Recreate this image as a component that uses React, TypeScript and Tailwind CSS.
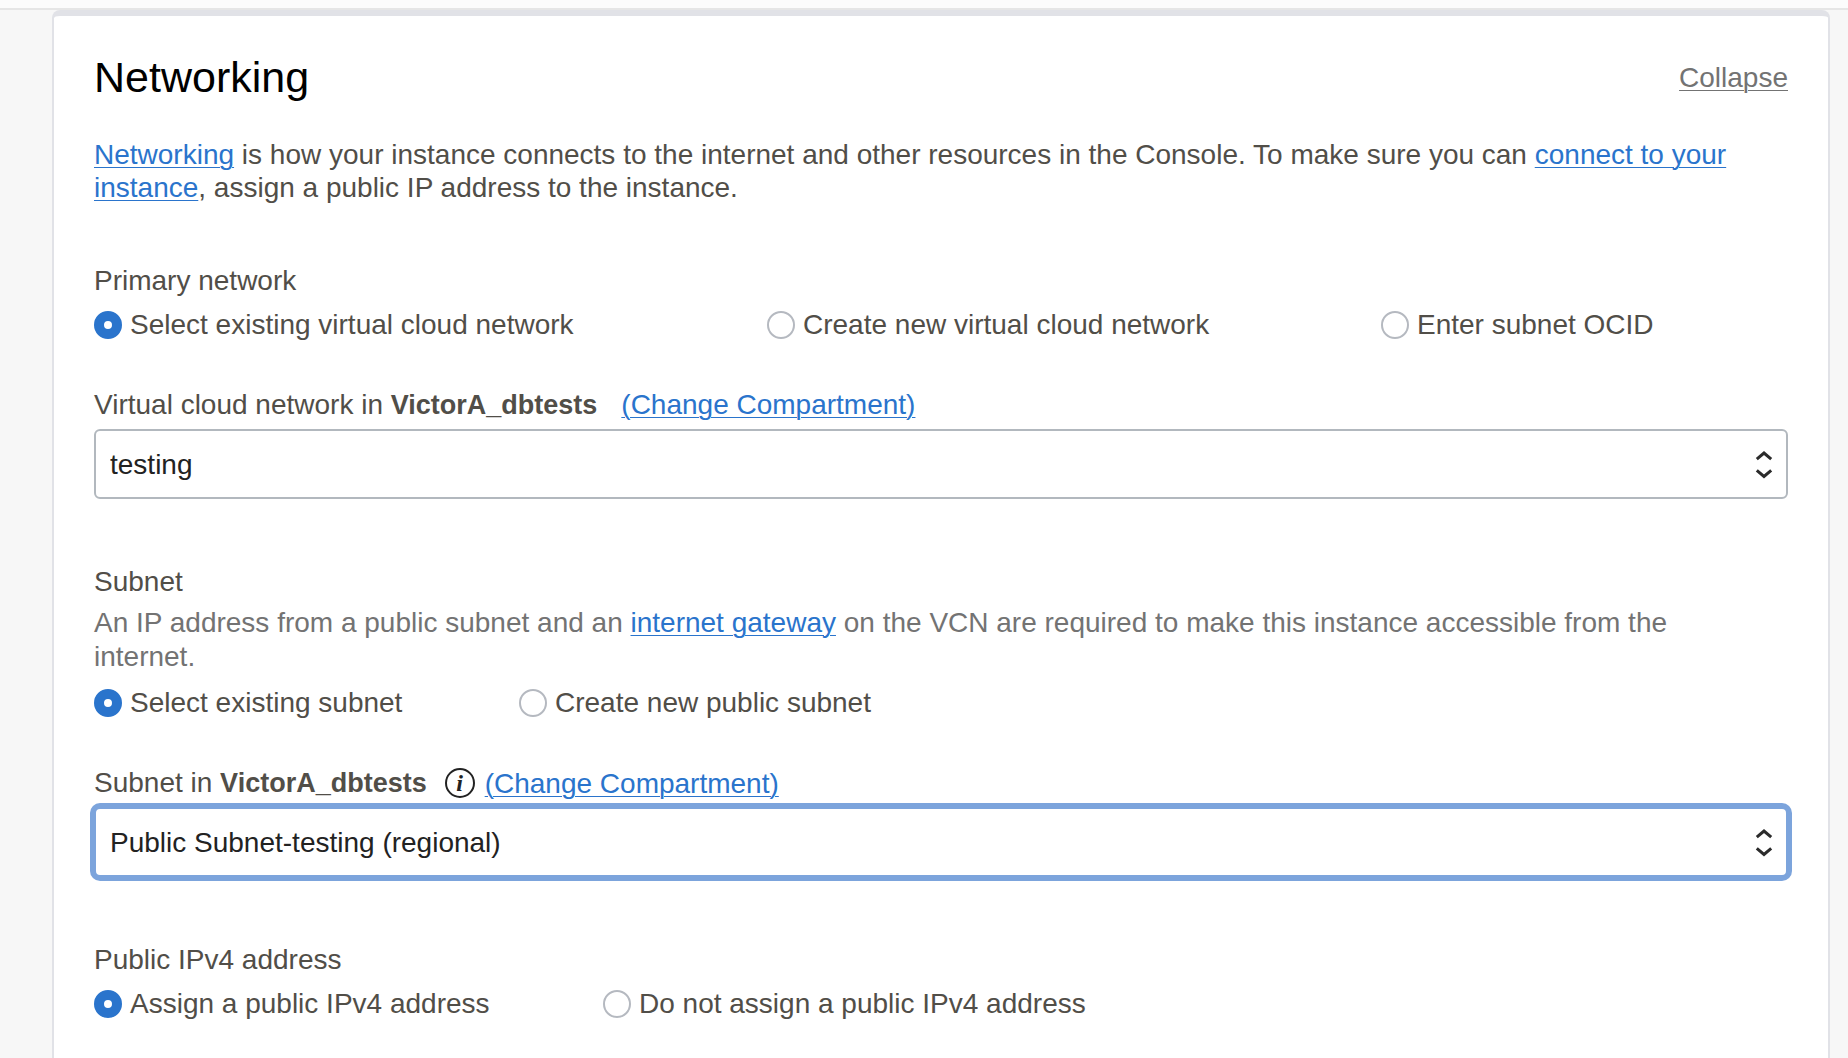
import { useId, type ReactNode } from "react";

const linkClass =
  "text-[#2a74cc] underline decoration-1 underline-offset-[3px]";

function Link({ children }: { children: ReactNode }) {
  return (
    <a href="#" className={linkClass}>
      {children}
    </a>
  );
}

function Radio({
  name,
  label,
  checked = false,
}: {
  name: string;
  label: string;
  checked?: boolean;
}) {
  return (
    <label className="flex items-center gap-2 whitespace-nowrap">
      <input
        type="radio"
        name={name}
        defaultChecked={checked}
        className="size-7 shrink-0 appearance-none rounded-full border-2 border-[#b5b9c0] bg-white checked:border-[10px] checked:border-[#2a74cc]"
      />
      {label}
    </label>
  );
}

function Select({
  id,
  value,
  highlighted = false,
}: {
  id: string;
  value: string;
  highlighted?: boolean;
}) {
  return (
    <div className="relative">
      <select
        id={id}
        className={
          highlighted
            ? "block h-[70px] w-full appearance-none rounded-md border-2 border-[#7ca4dc] bg-white px-3.5 text-[#222] ring-4 ring-[#7ca4dc] outline-none"
            : "block h-[70px] w-full appearance-none rounded-md border-2 border-[#b2b8be] bg-white px-3.5 text-[#222] outline-none"
        }
      >
        <option>{value}</option>
      </select>
      <svg
        aria-hidden="true"
        viewBox="0 0 20 32"
        fill="none"
        stroke="#2b2b2b"
        strokeWidth="3"
        className="pointer-events-none absolute inset-y-0 right-3.5 my-auto h-8 w-5"
      >
        <path d="M2.800 11.200 L10 5 L17.200 11.200" />
        <path d="M2.800 22.300 L10 28.500 L17.200 22.300" />
      </svg>
    </div>
  );
}

export default function App() {
  const vcnId = useId();
  const subnetId = useId();

  return (
    <div className="flex min-h-screen flex-col bg-[#f7f7f7] font-['Liberation_Sans',Arial,sans-serif] text-[28px] leading-[33px] text-[#514e48]">
      <div className="h-2.5 border-b-2 border-[#e6e6e6] bg-[#fcfcfc]" />
      <main className="mr-[18px] ml-[52px] flex-1 rounded-t-lg border-2 border-t-[6px] border-b-0 border-[#e1e2e7] bg-white px-10 pt-9">
        <header className="flex items-center justify-between">
          <h2 className="text-[43px] leading-[50px] text-black">Networking</h2>
          <button
            type="button"
            className="text-[#737373] underline decoration-1 underline-offset-[3px]"
          >
            Collapse
          </button>
        </header>

        <p className="mt-9 pr-10">
          <Link>Networking</Link> is how your instance connects to the internet
          and other resources in the Console. To make sure you can{" "}
          <Link>connect to your instance</Link>, assign a public IP address to
          the instance.
        </p>

        <fieldset className="mt-[60px]">
          <legend>Primary network</legend>
          <div className="mt-[11px] grid grid-cols-[673fr_614fr_407fr]">
            <Radio name="network" label="Select existing virtual cloud network" checked />
            <Radio name="network" label="Create new virtual cloud network" />
            <Radio name="network" label="Enter subnet OCID" />
          </div>
        </fieldset>

        <div className="mt-[47px] mb-[7px] flex gap-6">
          <label htmlFor={vcnId}>
            Virtual cloud network in{" "}
            <strong className="text-[27px]">VictorA_dbtests</strong>
          </label>
          <Link>(Change Compartment)</Link>
        </div>
        <Select id={vcnId} value="testing" />

        <fieldset className="mt-[66px]">
          <legend>Subnet</legend>
          <p className="mt-2 pr-10 leading-[34px] text-[#737373]">
            An IP address from a public subnet and an{" "}
            <Link>internet gateway</Link> on the VCN are required to make this
            instance accessible from the internet.
          </p>
          <div className="mt-3 grid grid-cols-[425px_1fr]">
            <Radio name="subnet" label="Select existing subnet" checked />
            <Radio name="subnet" label="Create new public subnet" />
          </div>
        </fieldset>

        <div className="mt-[47px] mb-[7px] flex items-center">
          <label htmlFor={subnetId}>
            Subnet in <strong className="text-[27px]">VictorA_dbtests</strong>
          </label>
          <button
            type="button"
            aria-label="About subnets"
            className="mr-2.5 ml-[18px] flex size-[30px] items-center justify-center rounded-full border-2 border-[#222] font-['Liberation_Serif',serif] text-2xl leading-none font-bold text-[#222] italic"
          >
            i
          </button>
          <Link>(Change Compartment)</Link>
        </div>
        <Select id={subnetId} value="Public Subnet-testing (regional)" highlighted />

        <fieldset className="mt-[66px]">
          <legend>Public IPv4 address</legend>
          <div className="mt-[11px] grid grid-cols-[509px_1fr]">
            <Radio name="ipv4" label="Assign a public IPv4 address" checked />
            <Radio name="ipv4" label="Do not assign a public IPv4 address" />
          </div>
        </fieldset>
      </main>
    </div>
  );
}
